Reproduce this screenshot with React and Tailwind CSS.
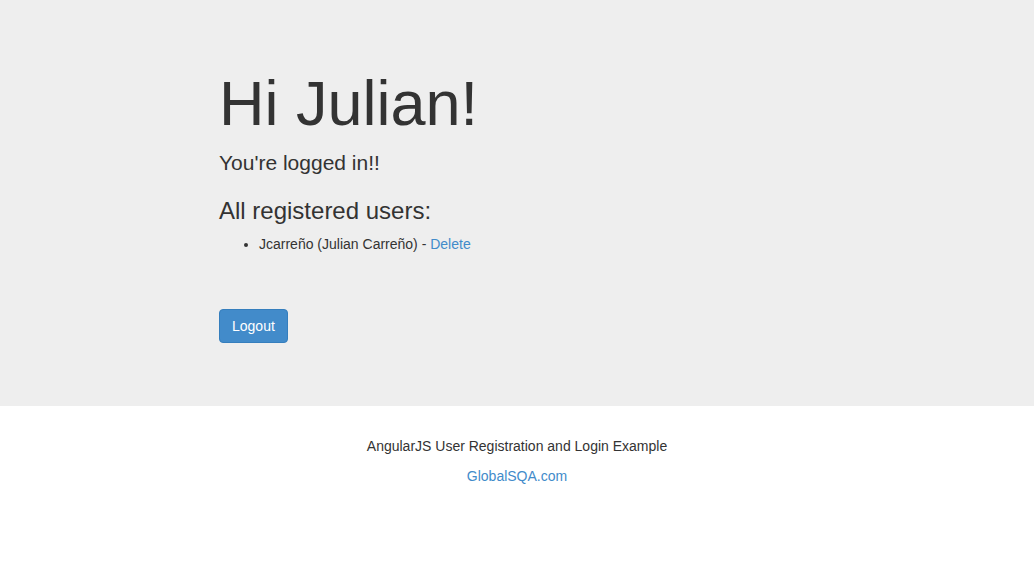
export default function App() {
  const users = [{ username: 'Jcarreño', firstName: 'Julian', lastName: 'Carreño' }]

  return (
    <div className="min-h-[561px] bg-white text-[#333333] text-[14px] leading-[20px] font-['Liberation_Sans',Arial,sans-serif]">
      {/* Jumbotron */}
      <div className="bg-[#eeeeee] h-[406px]">
        <div className="w-[750px] mx-auto px-[15px]">
          <div className="ml-[62px] pt-[69px]">
            <h1 className="m-0 text-[63px] leading-[69px] font-normal">Hi Julian!</h1>
            <p className="mt-[10px] mb-0 text-[21px] leading-[30px]">You're logged in!!</p>
            <h3 className="mt-[20px] mb-0 text-[24px] leading-[26px] font-normal">All registered users:</h3>
            <ul className="mt-[10px] mb-0 pl-[40px] list-disc">
              {users.map((user, index) => (
                <li key={index}>
                  {user.username} ({user.firstName} {user.lastName}) -{' '}
                  <a href="#" className="text-[#428bca]">Delete</a>
                </li>
              ))}
            </ul>
            <div className="mt-[55px]">
              <a
                href="#"
                className="inline-block px-[12px] py-[6px] text-white bg-[#428bca] border border-[#357ebd] rounded-[4px] text-[14px] leading-[20px]"
              >
                Logout
              </a>
            </div>
          </div>
        </div>
      </div>

      {/* Footer */}
      <div className="text-center pt-[30px]">
        <p className="m-0">AngularJS User Registration and Login Example</p>
        <p className="mt-[10px] mb-0">
          <a href="#" className="text-[#428bca]">GlobalSQA.com</a>
        </p>
      </div>
    </div>
  )
}
